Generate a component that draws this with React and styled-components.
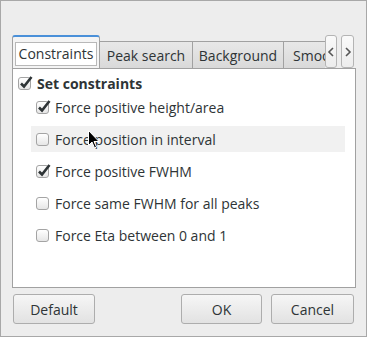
import React from 'react'
import styled, { createGlobalStyle } from 'styled-components'

const Global = createGlobalStyle`
  body {
    margin: 0;
    font-family: "Open Sans", "DejaVu Sans", sans-serif;
    font-size: 14px;
    color: #2e3436;
  }
`

const Window = styled.div`
  position: relative;
  box-sizing: border-box;
  width: 367px;
  height: 337px;
  border: 1px solid #a8a8a8;
  background: #ededed;
  padding: 34px 0 0 11px;
`

const TabBar = styled.div`
  display: flex;
  align-items: flex-end;
  height: 33px;
  width: 343px;
`

const TabStrip = styled.div`
  display: flex;
  align-items: flex-end;
  width: 313px;
  height: 33px;
  overflow: hidden;
`

const Tab = styled.div`
  box-sizing: border-box;
  flex: none;
  width: ${p => p.$w}px;
  height: ${p => (p.$active ? 34 : 27)}px;
  margin-bottom: ${p => (p.$active ? -1 : 0)}px;
  display: flex;
  align-items: center;
  border: 1px solid #a1a1a1;
  border-bottom: none;
  border-left: ${p => (p.$first || p.$active ? '1px solid #a1a1a1' : 'none')};
  border-top: ${p => (p.$active ? '2px solid #4a90d9' : '1px solid #a1a1a1')};
  border-radius: ${p => (p.$active ? '3px 3px 0 0' : '0')};
  background: ${p => (p.$active ? '#f4f4f4' : 'linear-gradient(#e8e8e8, #d9d9d9)')};
  position: relative;
  z-index: ${p => (p.$active ? 2 : 1)};
  white-space: nowrap;
  padding-left: ${p => p.$pad || 0}px;
  justify-content: ${p => (p.$pad ? 'flex-start' : 'center')};
`

const Label = styled.span`
  box-sizing: border-box;
  display: flex;
  align-items: center;
  height: 24px;
  padding: 0 3px;
  margin-top: 1px;
  background: #ffffff;
  border: 1px solid #b8b8b8;
`

const ArrowButton = styled.div`
  box-sizing: border-box;
  flex: none;
  width: ${p => p.$w}px;
  height: 33px;
  margin-left: ${p => p.$ml}px;
  border: 1px solid #b4b4b4;
  border-radius: 3px;
  background: linear-gradient(#fafafa, #ececec);
  display: flex;
  align-items: center;
  justify-content: center;
`

const Pane = styled.div`
  box-sizing: border-box;
  position: relative;
  z-index: 1;
  width: 344px;
  height: 220px;
  border: 1px solid #a1a1a1;
  background: #ffffff;
  padding-top: 3px;
  display: flex;
  flex-direction: column;
  gap: 6px;
`

const HeaderRow = styled.label`
  display: flex;
  align-items: center;
  height: 22px;
  padding-left: 5px;
  gap: 6px;
  font-weight: 700;
  margin-bottom: -6px;
`

const Row = styled.label`
  display: flex;
  align-items: center;
  height: 26px;
  margin: 0 10px 0 18px;
  padding-left: 5px;
  gap: 6px;
  background: ${p => (p.$hover ? '#f1f1f1' : 'transparent')};
`

const Box = styled.span`
  position: relative;
  box-sizing: border-box;
  flex: none;
  width: 13px;
  height: 13px;
  border: 1px solid #a4a4a4;
  border-radius: 3px;
  background: linear-gradient(#ffffff, #e6e6e6);
  svg {
    position: absolute;
    left: 0px;
    top: -3px;
  }
`

const Footer = styled.div`
  display: flex;
  width: 344px;
  margin-top: 6px;
  padding-left: 1px;
  gap: 9px;
`

const Button = styled.div`
  box-sizing: border-box;
  width: ${p => p.$w}px;
  height: 30px;
  margin-right: ${p => p.$mr || 0}px;
  border: 1px solid #adadad;
  border-radius: 3px;
  background: linear-gradient(#f6f6f6, #e2e2e2);
  display: flex;
  align-items: center;
  justify-content: center;
`

const Cursor = styled.svg`
  position: absolute;
  left: 87px;
  top: 129px;
  z-index: 5;
`

function Check({ on }) {
  return (
    <Box>
      {on && (
        <svg width="14" height="14" viewBox="0 0 14 14">
          <path d="M2 8.5 L5 11.5 L12.5 2" fill="none" stroke="#2e3436" strokeWidth="2.6" />
        </svg>
      )}
    </Box>
  )
}

function Chevron({ dir }) {
  const d = dir === 'left' ? 'M6 1 L2 5 L6 9' : 'M2 1 L6 5 L2 9'
  return (
    <svg width="8" height="10" viewBox="0 0 8 10">
      <path d={d} fill="none" stroke="#555" strokeWidth="1.6" />
    </svg>
  )
}

const tabs = [
  { name: 'Constraints', w: 88 },
  { name: 'Peak search', w: 93 },
  { name: 'Background', w: 91 },
  { name: 'Smoothing', w: 60, pad: 9 },
]

const options = [
  { text: 'Force positive height/area', on: true },
  { text: 'Force position in interval', on: false, hover: true },
  { text: 'Force positive FWHM', on: true },
  { text: 'Force same FWHM for all peaks', on: false },
  { text: 'Force Eta between 0 and 1', on: false },
]

export default function App() {
  return (
    <>
      <Global />
      <Window>
        <TabBar>
          <TabStrip>
            {tabs.map((t, i) => (
              <Tab key={t.name} $w={t.w} $active={i === 0} $first={i === 0} $pad={t.pad}>
                {i === 0 ? <Label>{t.name}</Label> : t.name}
              </Tab>
            ))}
          </TabStrip>
          <ArrowButton $w={12} $ml={0}><Chevron dir="left" /></ArrowButton>
          <ArrowButton $w={13} $ml={4}><Chevron dir="right" /></ArrowButton>
        </TabBar>
        <Pane>
          <HeaderRow>
            <Check on />
            Set constraints
          </HeaderRow>
          {options.map(o => (
            <Row key={o.text} $hover={o.hover}>
              <Check on={o.on} />
              {o.text}
            </Row>
          ))}
        </Pane>
        <Footer>
          <Button $w={82} $mr={77}>Default</Button>
          <Button $w={81}>OK</Button>
          <Button $w={83}>Cancel</Button>
        </Footer>
        <Cursor width="12" height="19" viewBox="0 0 12 19">
          <path d="M0.5 0.5 L0.5 15.5 L4 12 L6.5 18 L8.5 17 L6 11.5 L11 11.5 Z" fill="#000" stroke="#fff" strokeWidth="1" />
        </Cursor>
      </Window>
    </>
  )
}
